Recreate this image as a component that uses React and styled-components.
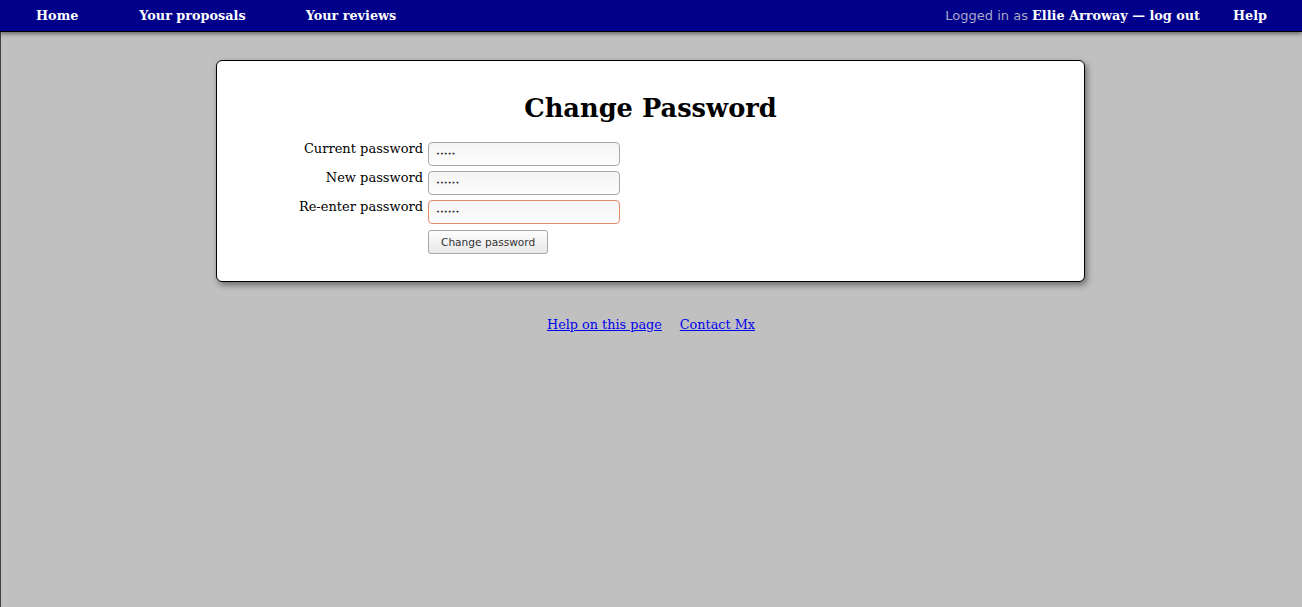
import styled, { createGlobalStyle } from "styled-components";

const GlobalStyle = createGlobalStyle`
  html, body {
    margin: 0;
    padding: 0;
    background: #c0c0c0;
    font-family: "DejaVu Serif", serif;
    font-size: 13px;
  }
`;

const Page = styled.div`
  min-height: 607px;
  padding-right: 1px;
  box-shadow: inset 1px 0 0 #3a4448;
`;

const NavBar = styled.nav`
  height: 31px;
  margin-right: -1px;
  background: #00008b;
  border-bottom: 1px solid #000;
  box-shadow: 0 2px 4px rgba(0, 0, 0, 0.45);
  display: flex;
  align-items: center;
  padding: 0 35px 0 36px;
`;

const NavLink = styled.a`
  color: #fff;
  font-weight: bold;
  font-size: 12.8px;
  text-decoration: none;
  margin-right: ${(p) => p.$space || 0}px;
`;

const Spacer = styled.div`
  flex: 1;
`;

const UserInfo = styled.span`
  color: #a8a8c8;
  font-family: "DejaVu Sans", sans-serif;
  font-size: 13px;
  margin-right: 33px;

  b {
    color: #fff;
    font-family: "DejaVu Serif", serif;
    font-size: 12.8px;
  }
`;

const Card = styled.div`
  box-sizing: border-box;
  width: 869px;
  margin: 28px auto 0;
  background: #fff;
  border: 1px solid #000;
  border-radius: 6px;
  box-shadow: 2px 3px 6px rgba(0, 0, 0, 0.45);
  padding: 31px 0 27px;
`;

const Title = styled.h1`
  margin: 0 0 18px;
  text-align: center;
  font-size: 25.7px;
  font-weight: bold;
  line-height: 32px;
`;

const Form = styled.form`
  display: grid;
  grid-template-columns: 206px 192px;
  column-gap: 5px;
  row-gap: 5px;
  align-items: start;
`;

const Label = styled.label`
  text-align: right;
  line-height: 14px;
`;

const Input = styled.input`
  box-sizing: border-box;
  width: 192px;
  height: 24px;
  margin: 0;
  padding: 0 7px;
  border: 1px solid ${(p) => (p.$focus ? "#e08a6e" : "#a8a8a8")};
  border-radius: 4px;
  background: linear-gradient(#f4f4f4, #fdfdfd);
  font-family: "DejaVu Sans", sans-serif;
  font-size: 6.6px;
  color: #223;
  outline: none;
`;

const Button = styled.button`
  grid-column: 2;
  justify-self: start;
  margin-top: 1px;
  height: 24px;
  padding: 0 12px;
  border: 1px solid #a8a8a8;
  border-radius: 3px;
  background: linear-gradient(#fdfdfd, #e8e8e8);
  font-family: "DejaVu Sans", sans-serif;
  font-size: 10.6px;
  color: #333;
`;

const Footer = styled.div`
  display: flex;
  justify-content: center;
  gap: 18px;
  margin: 35px -1px 0 0;
`;

const FooterLink = styled.a`
  color: #0000ee;
  text-decoration: underline;
  font-size: 12.8px;
`;

export default function App() {
  return (
    <Page>
      <GlobalStyle />
      <NavBar>
        <NavLink href="#" $space={61}>Home</NavLink>
        <NavLink href="#" $space={60}>Your proposals</NavLink>
        <NavLink href="#">Your reviews</NavLink>
        <Spacer />
        <UserInfo>
          Logged in as <b>Ellie Arroway — log out</b>
        </UserInfo>
        <NavLink href="#">Help</NavLink>
      </NavBar>
      <Card>
        <Title>Change Password</Title>
        <Form onSubmit={(e) => e.preventDefault()}>
          <Label>Current password</Label>
          <Input type="password" defaultValue="abcde" />
          <Label>New password</Label>
          <Input type="password" defaultValue="abcdef" />
          <Label>Re-enter password</Label>
          <Input type="password" defaultValue="abcdef" $focus />
          <Button type="submit">Change password</Button>
        </Form>
      </Card>
      <Footer>
        <FooterLink href="#">Help on this page</FooterLink>
        <FooterLink href="#">Contact Mx</FooterLink>
      </Footer>
    </Page>
  );
}
